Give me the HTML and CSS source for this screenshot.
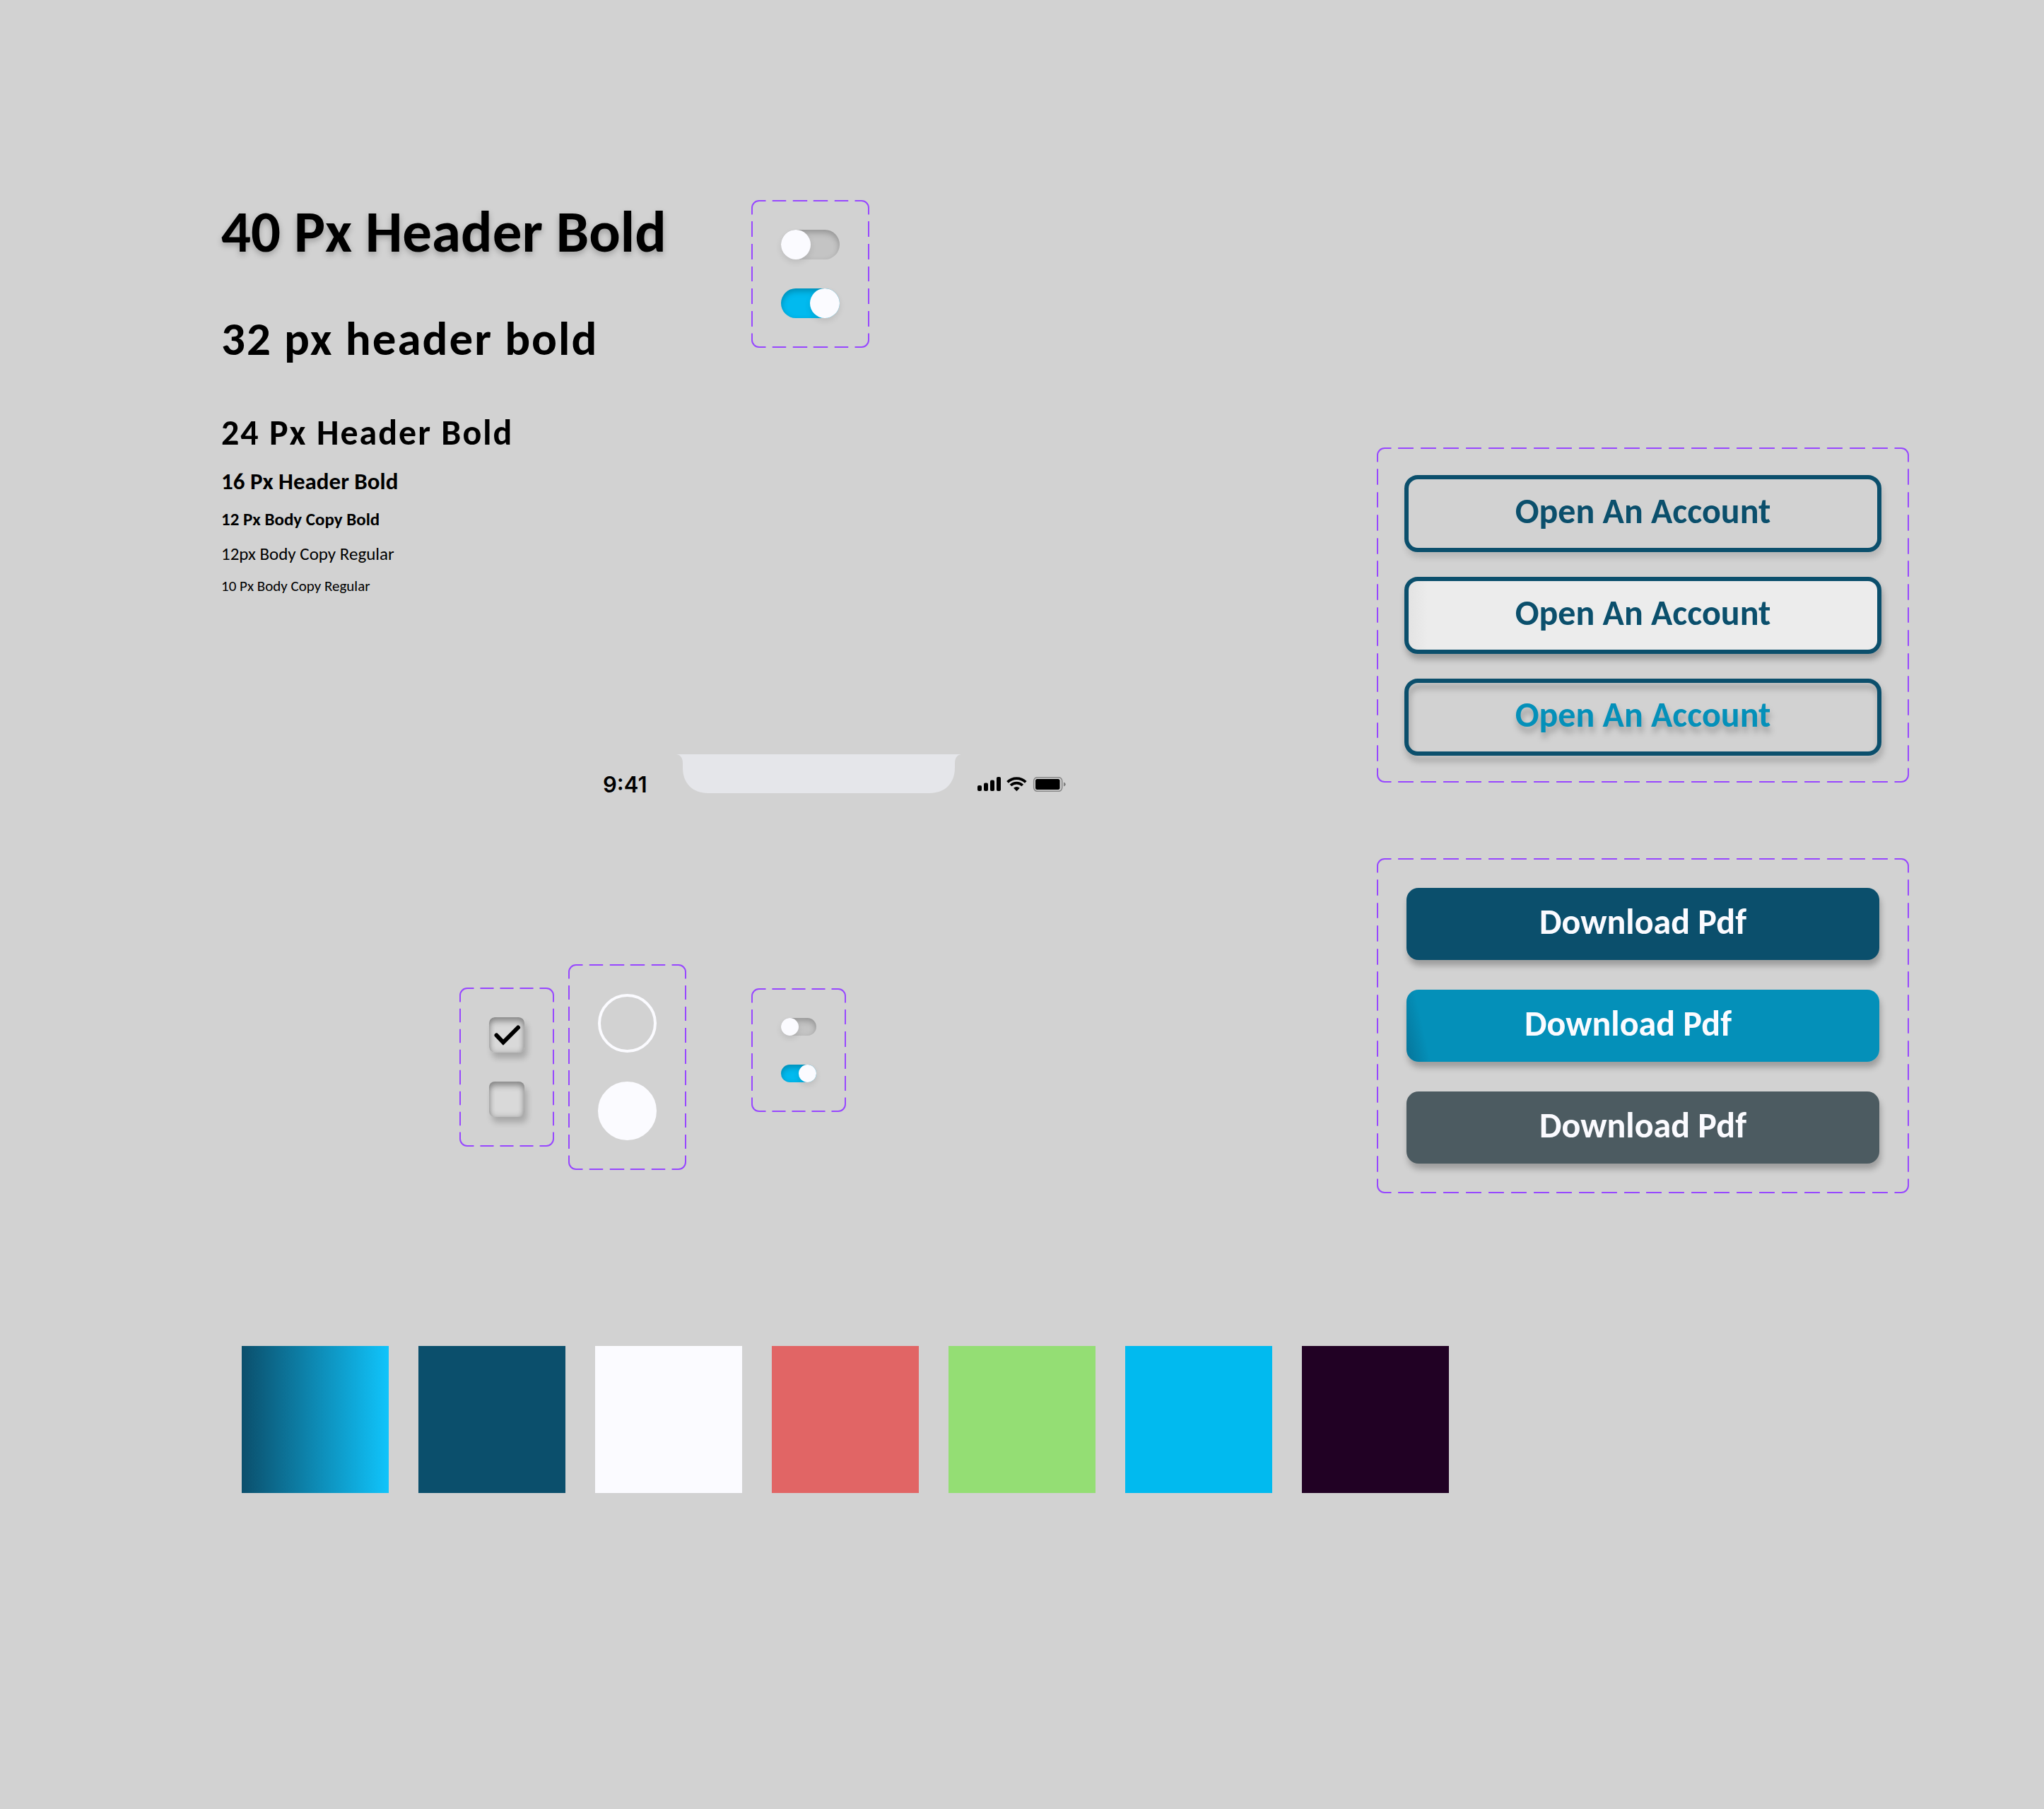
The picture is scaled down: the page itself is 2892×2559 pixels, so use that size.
FILE: index.html
```html
<!DOCTYPE html>
<html lang="en">
<head>
<meta charset="utf-8">
<title>Style guide</title>
<link rel="stylesheet" href="styles.css">
</head>
<body>
<main class="sheet">
  <div class="left">
    <div class="top-row">
      <section class="type">
        <h1 class="type-40">40 Px Header Bold</h1>
        <h2 class="type-32">32 px header bold</h2>
        <h3 class="type-24">24 Px Header Bold</h3>
        <h4 class="type-16">16 Px Header Bold</h4>
        <p class="type-12 strong">12 Px Body Copy Bold</p>
        <p class="type-12">12px Body Copy Regular</p>
        <p class="type-10">10 Px Body Copy Regular</p>
      </section>
      <section class="frame">
        <input class="switch" type="checkbox" role="switch" aria-label="Large switch, off">
        <input class="switch" type="checkbox" role="switch" aria-label="Large switch, on" checked>
      </section>
    </div>

    <div class="status">
      <span class="time">9:41</span>
      <svg class="notch" width="403" height="55" viewBox="0 0 403 55" aria-hidden="true">
        <path d="M0 0C6 1 9 5 9 13V19C9 41 23 55 45 55H358C380 55 394 41 394 19V13C394 5 397 1 403 0Z"/>
      </svg>
      <svg class="signals" width="125" height="21" viewBox="0 0 125 21" aria-hidden="true">
        <rect x="0" y="12" width="6" height="8" rx="2"/>
        <rect x="9" y="8.500" width="6" height="11.500" rx="2"/>
        <rect x="18" y="4.500" width="6" height="15.500" rx="2"/>
        <rect x="27" y="0" width="6" height="20" rx="2"/>
        <g fill="none" stroke="#000" stroke-width="3.800">
          <path d="M42.500 7.300A18.500 18.500 0 0 1 68.300 7.300"/>
          <path d="M47 12A12 12 0 0 1 63.800 12"/>
        </g>
        <path d="M51 15.800Q55.400 12.200 59.800 15.800L55.400 20.300Z"/>
        <rect x="79.700" y="0.700" width="40" height="19.600" rx="5" fill="none" stroke="#000" stroke-opacity="0.350" stroke-width="1.600"/>
        <rect x="82" y="3" width="34.500" height="15" rx="2.500"/>
        <path d="M122 7.500Q124.800 8.500 124.800 10.500T122 13.500Z" fill-opacity="0.400"/>
      </svg>
    </div>

    <div class="controls">
      <section class="frame">
        <input class="check" type="checkbox" aria-label="Checkbox, ticked" checked>
        <input class="check" type="checkbox" aria-label="Checkbox, empty">
      </section>
      <section class="frame">
        <input class="radio" type="radio" name="choice" aria-label="Radio, empty">
        <input class="radio" type="radio" name="choice" aria-label="Radio, selected" checked>
      </section>
      <section class="frame small-switches">
        <input class="switch small" type="checkbox" role="switch" aria-label="Small switch, off">
        <input class="switch small" type="checkbox" role="switch" aria-label="Small switch, on" checked>
      </section>
    </div>
  </div>

  <div class="right">
    <section class="frame outlined">
      <button class="btn line" type="button">Open An Account</button>
      <button class="btn line hover" type="button">Open An Account</button>
      <button class="btn line pressed" type="button">Open An Account</button>
    </section>
    <section class="frame filled">
      <button class="btn solid" type="button">Download Pdf</button>
      <button class="btn solid hover" type="button">Download Pdf</button>
      <button class="btn solid disabled" type="button">Download Pdf</button>
    </section>
  </div>

  <section class="swatches" aria-label="Colors">
    <div class="swatch gradient"></div>
    <div class="swatch navy"></div>
    <div class="swatch white"></div>
    <div class="swatch red"></div>
    <div class="swatch green"></div>
    <div class="swatch sky"></div>
    <div class="swatch plum"></div>
  </section>
</main>
</body>
</html>
```
FILE: styles.css
```css
:root {
  --navy: #0b4f6c;
  --teal: #0490b9;
  --white: #fbfbff;
  --sky: #01baef;
}

* {
  box-sizing: border-box;
}

body {
  margin: 0;
  background: #d2d2d2;
  color: #000;
  font-family: Carlito, Calibri, Lato, sans-serif;
}

.sheet {
  display: grid;
  grid-template-columns: 1fr minmax(0, 753px);
  padding: 283px 191px 447px 313px;
}

h1, h2, h3, h4, p {
  margin: 0;
}

/* Typography samples */
.top-row {
  display: flex;
  align-items: flex-start;
}

.type {
  width: 750px;
}

.type-40 {
  font-size: 83px;
  line-height: 90px;
  text-shadow: 0 4px 8px rgba(0, 0, 0, 0.25);
}

.type-32 {
  margin-top: 66px;
  font-size: 67px;
  line-height: 80px;
  letter-spacing: 2px;
}

.type-24 {
  margin-top: 63px;
  font-size: 50px;
  line-height: 60px;
  letter-spacing: 2px;
}

.type-16 {
  margin-top: 19px;
  font-size: 33px;
  line-height: 40px;
}

.type-12 {
  margin-top: 19px;
  font-size: 25px;
  line-height: 30px;
}

.strong {
  font-weight: 700;
}

.type-10 {
  margin-top: 17px;
  font-size: 21px;
  line-height: 26px;
}

/* Dashed component frame */
.frame {
  display: flex;
  flex-direction: column;
  gap: 41px;
  padding: 40px;
  border: 2px solid transparent;
  border-image: url("data:image/svg+xml,%3Csvg xmlns='http://www.w3.org/2000/svg' width='163' height='163' viewBox='0 0 163 163'%3E%3Cg fill='none' stroke='%239747ff' stroke-width='4'%3E%3Cpath d='M2 41V22A20 20 0 0 1 22 2H41M122 2H141A20 20 0 0 1 161 22V41M161 122V141A20 20 0 0 1 141 161H122M41 161H22A20 20 0 0 1 2 141V122'/%3E%3Cpath d='M60 2H103M60 161H103M2 60V103M161 60V103'/%3E%3C/g%3E%3C/svg%3E") 50 / 25px / 0 round;
}

/* Switches */
.switch {
  appearance: none;
  width: 83px;
  height: 42px;
  margin: 0;
  border-radius: 21px;
  background: #c4c4c4;
  box-shadow: inset 0 4px 8px rgba(0, 0, 0, 0.25);
}

.switch::before {
  content: "";
  display: block;
  width: 42px;
  height: 42px;
  border-radius: 50%;
  background: var(--white);
  box-shadow: 0 4px 8px rgba(0, 0, 0, 0.1);
}

.switch:checked {
  background: var(--sky);
}

.switch:checked::before {
  margin-left: auto;
}

.small {
  width: 50px;
  height: 25px;
}

.small::before {
  width: 25px;
  height: 25px;
}

/* Phone status bar */
.status {
  display: flex;
  align-items: flex-end;
  margin: 225px 0 0 540px;
}

.time {
  width: 104px;
  font: 600 31px/24px Inter, sans-serif;
}

.notch {
  fill: #e5e6ea;
}

.signals {
  margin: 0 0 2px 23px;
}

/* Form controls */
.controls {
  display: flex;
  align-items: center;
  margin: 242px 0 0 337px;
}

.controls .frame + .frame {
  margin-left: 20px;
}

.controls .small-switches.frame {
  align-self: flex-start;
  margin: 34px 0 0 92px;
}

.check {
  appearance: none;
  width: 50px;
  height: 50px;
  margin: 0;
  border-radius: 8px;
  background: #d9d9d9;
  box-shadow: 4px 8px 8px rgba(0, 0, 0, 0.2), inset 0 6px 8px rgba(0, 0, 0, 0.3), inset 0 0 8px rgba(0, 0, 0, 0.2);
}

.check:checked {
  background: #d9d9d9 url("data:image/svg+xml,%3Csvg xmlns='http://www.w3.org/2000/svg' viewBox='0 0 50 50'%3E%3Cpath d='M10.500 25.500L20 35.500L41 14.500' fill='none' stroke='%23000' stroke-width='6' stroke-linecap='round'/%3E%3C/svg%3E");
}

.radio {
  appearance: none;
  width: 83px;
  height: 83px;
  margin: 0;
  border: 4px solid var(--white);
  border-radius: 50%;
}

.radio:checked {
  background: var(--white);
}

/* Buttons */
.right {
  display: flex;
  flex-direction: column;
  gap: 107px;
  padding-top: 350px;
}

.outlined {
  gap: 35px;
  padding: 37px 37px 36px;
}

.filled {
  gap: 42px;
}

.btn {
  font-family: inherit;
  font-size: 50px;
  font-weight: 700;
  line-height: 60px;
}

.line {
  padding: 15px 0 22px;
  border: 6px solid var(--navy);
  border-radius: 19px;
  background: #d2d2d2;
  color: var(--navy);
  box-shadow: 2px 8px 8px rgba(0, 0, 0, 0.12);
}

.line.hover {
  background: linear-gradient(90deg, #e3e3e3, #ececec 4%);
  box-shadow: 2px 8px 8px rgba(0, 0, 0, 0.25);
}

.line.pressed {
  background: transparent;
  color: var(--teal);
  box-shadow: none;
  filter: drop-shadow(2px 8px 4px rgba(0, 0, 0, 0.25));
}

.solid {
  padding: 18px 0 24px;
  border: 0;
  border-radius: 17px;
  background: var(--navy);
  color: var(--white);
  box-shadow: 2px 8px 8px rgba(0, 0, 0, 0.25);
}

.solid.hover {
  padding-right: 42px;
  background: linear-gradient(77deg, #067499, var(--teal) 5%);
}

.solid.disabled {
  background: #4c5b61;
}

/* Color swatches */
.swatches {
  grid-column: 1 / -1;
  display: grid;
  grid-template-columns: repeat(7, 208px);
  gap: 42px;
  margin: 216px 0 0 29px;
}

.swatch {
  height: 208px;
}

.gradient {
  background: linear-gradient(90deg, var(--navy), #10c4fb);
}

.navy {
  background: var(--navy);
}

.white {
  background: var(--white);
}

.red {
  background: #e16565;
}

.green {
  background: #94de74;
}

.sky {
  background: var(--sky);
}

.plum {
  background: #210124;
}
```
